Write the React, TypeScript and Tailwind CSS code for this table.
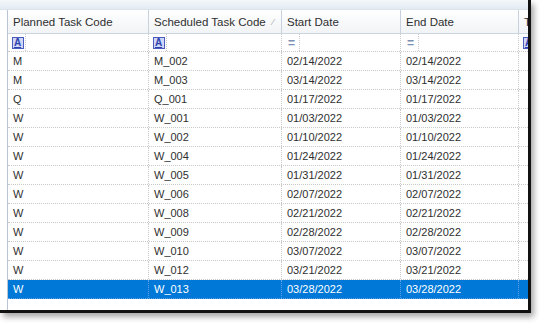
import React from "react";

type Row = { planned: string; scheduled: string; start: string; end: string };

const rows: Row[] = [
  { planned: "M", scheduled: "M_002", start: "02/14/2022", end: "02/14/2022" },
  { planned: "M", scheduled: "M_003", start: "03/14/2022", end: "03/14/2022" },
  { planned: "Q", scheduled: "Q_001", start: "01/17/2022", end: "01/17/2022" },
  { planned: "W", scheduled: "W_001", start: "01/03/2022", end: "01/03/2022" },
  { planned: "W", scheduled: "W_002", start: "01/10/2022", end: "01/10/2022" },
  { planned: "W", scheduled: "W_004", start: "01/24/2022", end: "01/24/2022" },
  { planned: "W", scheduled: "W_005", start: "01/31/2022", end: "01/31/2022" },
  { planned: "W", scheduled: "W_006", start: "02/07/2022", end: "02/07/2022" },
  { planned: "W", scheduled: "W_008", start: "02/21/2022", end: "02/21/2022" },
  { planned: "W", scheduled: "W_009", start: "02/28/2022", end: "02/28/2022" },
  { planned: "W", scheduled: "W_010", start: "03/07/2022", end: "03/07/2022" },
  { planned: "W", scheduled: "W_012", start: "03/21/2022", end: "03/21/2022" },
  { planned: "W", scheduled: "W_013", start: "03/28/2022", end: "03/28/2022" },
];

// column widths: planned, scheduled, start, end, trailing
const cols = "grid grid-cols-[141px_133px_119px_118px_1fr]";

function TextFilterIcon() {
  return (
    <span className="flex h-[12px] w-[12px] items-center justify-center border border-[#4b5cc0] bg-[#cfd6f7] text-[10px] font-bold leading-none text-[#2f43ae] underline">
      A
    </span>
  );
}

function EqualsIcon() {
  return <span className="text-[12px] font-bold leading-none text-[#7b8fb0]">=</span>;
}

function FilterCell({ kind, last }: { kind: "text" | "eq"; last?: boolean }) {
  return (
    <div className={`flex h-full items-center ${last ? "" : "border-r border-dotted border-[#c9c9c9]"}`}>
      <div className="flex h-full w-[18px] items-center justify-center border-r border-dotted border-[#c9c9c9] pl-[2px] pt-[1px]">
        {kind === "text" ? <TextFilterIcon /> : <EqualsIcon />}
      </div>
    </div>
  );
}

function HeaderCell({ label, sorted }: { label: string; sorted?: boolean }) {
  return (
    <div className="flex h-full items-center justify-between border-r border-[#c7d2de] pl-[5px] pr-[7px] pt-[2px]">
      <span className="whitespace-nowrap">{label}</span>
      {sorted && <span className="text-[9px] text-[#a8a8a8]">⁄</span>}
    </div>
  );
}

export default function App() {
  return (
    <div className="relative h-[323px] w-[540px] overflow-hidden bg-white font-['Liberation_Sans',Arial,sans-serif] text-[11px] text-[#2f2f2f]">
      <div className="flex h-[313px] w-[531px] flex-col border-b-[3px] border-r-[3px] border-[#111] bg-white shadow-[3px_4px_6px_rgba(0,0,0,0.35)]">
        <div className="h-[10px] border-b border-[#dbe3ec] bg-gradient-to-b from-[#f4f7fa] to-[#e3eaf2]" />
        <div className="flex flex-1 pl-[7px]">
          <div className="flex flex-1 flex-col overflow-hidden border-l border-[#b9c5d3]">
            <div className={`${cols} h-[24px] border-b border-[#cbd5e0] bg-gradient-to-b from-white to-[#f1f3f6] text-[11.5px]`}>
              <HeaderCell label="Planned Task Code" />
              <HeaderCell label="Scheduled Task Code" sorted />
              <HeaderCell label="Start Date" />
              <HeaderCell label="End Date" />
              <div className="flex h-full items-center pl-[5px] pt-[2px]">T</div>
            </div>
            <div className={`${cols} h-[18px] border-b border-dotted border-[#c9c9c9]`}>
              <FilterCell kind="text" />
              <FilterCell kind="text" />
              <FilterCell kind="eq" />
              <FilterCell kind="eq" />
              <FilterCell kind="text" last />
            </div>
            {rows.map((r, i) => {
              const selected = i === rows.length - 1;
              return (
                <div
                  key={r.scheduled}
                  className={`${cols} h-[19px] border-b border-dotted ${
                    selected ? "border-[#5aa0e6] bg-[#0078d7] text-white" : "border-[#c9c9c9]"
                  }`}
                >
                  {[r.planned, r.scheduled, r.start, r.end, ""].map((v, j) => (
                    <div
                      key={j}
                      className={`flex items-center pl-[5px] leading-none ${
                        j < 4 ? `border-r border-dotted ${selected ? "border-[#5aa0e6]" : "border-[#c9c9c9]"}` : ""
                      }`}
                    >
                      {v}
                    </div>
                  ))}
                </div>
              );
            })}
          </div>
        </div>
      </div>
    </div>
  );
}
